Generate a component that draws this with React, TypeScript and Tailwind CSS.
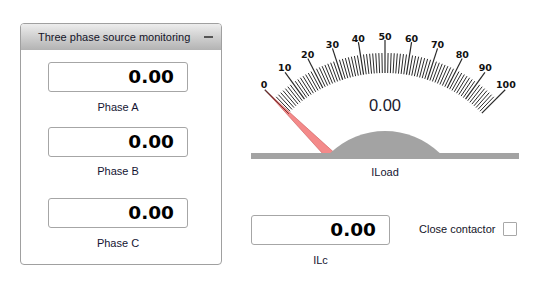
const CX = 385;
const CY = 210;

const polar = (r: number, deg: number) => {
  const a = (deg * Math.PI) / 180;
  return { x: CX + r * Math.cos(a), y: CY - r * Math.sin(a) };
};

const valueToAngle = (v: number) => 135 - (v / 100) * 90;

const Gauge = ({ value }: { value: number }) => {
  // 8 minor steps between labelled ticks
  const ticks = Array.from({ length: 81 }, (_, i) => i * 1.25);
  const na = valueToAngle(value);
  const tip = polar(169, na);
  const base = polar(77, na);
  const perp = { x: Math.sin((na * Math.PI) / 180), y: Math.cos((na * Math.PI) / 180) };
  const hw = 4.6;
  const needle = `${tip.x},${tip.y} ${base.x + perp.x * hw},${base.y + perp.y * hw} ${base.x - perp.x * hw},${base.y - perp.y * hw}`;
  const lineEnd = polar(136, na);

  return (
    <svg width={280} height={142} viewBox="245 20 280 142" className="block">
      {ticks.map((v) => {
        const major = v % 10 === 0;
        const a = valueToAngle(v);
        const p1 = polar(137, a);
        const p2 = polar(major ? 170 : 157, a);
        return (
          <line
            key={v}
            x1={p1.x}
            y1={p1.y}
            x2={p2.x}
            y2={p2.y}
            stroke="#2a2a2a"
            strokeWidth={major ? 1.2 : 1}
          />
        );
      })}
      {Array.from({ length: 11 }, (_, i) => i * 10).map((v) => {
        const a = valueToAngle(v);
        const p = polar(174, a + (90 - a) / 45);
        return (
          <text
            key={v}
            x={p.x}
            y={p.y}
            textAnchor="middle"
            dominantBaseline="central"
            fontFamily="DejaVu Sans, sans-serif"
            fontWeight="bold"
            fontSize="9.5"
            fill="#111"
          >
            {v}
          </text>
        );
      })}
      <text
        x={CX}
        y={105}
        textAnchor="middle"
        dominantBaseline="central"
        fontFamily="Liberation Sans, sans-serif"
        fontSize="16.5"
        fill="#1a1a2e"
      >
        {value.toFixed(2)}
      </text>
      <polygon points={needle} fill="#f48a8a" stroke="#c85a5a" strokeWidth={0.6} />
      <line x1={tip.x} y1={tip.y} x2={lineEnd.x} y2={lineEnd.y} stroke="#5a1a1a" strokeWidth={0.8} />
      <path d="M 330.3 153 A 79 79 0 0 1 439.7 153 Z" fill="#a3a3a3" />
      <rect x={251} y={153} width={268} height={6} fill="#a3a3a3" />
    </svg>
  );
};

const ValueBox = ({ value, width }: { value: string; width: string }) => (
  <div
    className={`${width} h-[30px] bg-white border border-[#a6a6a6] rounded-[3px] flex items-center justify-end pr-[13px] font-['DejaVu_Sans',sans-serif] font-bold text-[18.5px] text-black`}
  >
    {value}
  </div>
);

const Caption = ({ children, className = "" }: { children: string; className?: string }) => (
  <div className={`w-[140px] text-center text-[11px] leading-[14px] text-[#141432] ${className}`}>{children}</div>
);

const App = () => {
  return (
    <div className="w-[549px] h-[293px] bg-white flex pt-[20px] pl-[20px] font-['Liberation_Sans',sans-serif]">
      <div className="mt-[3px] w-[202px] h-[242px] border border-[#a0a0a0] rounded-[4px] flex flex-col overflow-hidden">
        <div className="h-[26px] bg-gradient-to-b from-[#ededed] to-[#b3b3b3] flex items-center justify-between pl-[17px] pr-[8px]">
          <span className="text-[11px] text-[#141428]">Three phase source monitoring</span>
          <span className="w-[9px] h-[2px] bg-[#555]" />
        </div>
        <div className="flex flex-col pl-[27px]">
          <div className="mt-[12px]">
            <ValueBox value="0.00" width="w-[140px]" />
          </div>
          <Caption className="mt-[8px]">Phase A</Caption>
          <div className="mt-[13px]">
            <ValueBox value="0.00" width="w-[140px]" />
          </div>
          <Caption className="mt-[7px]">Phase B</Caption>
          <div className="mt-[20px]">
            <ValueBox value="0.00" width="w-[140px]" />
          </div>
          <Caption className="mt-[8px]">Phase C</Caption>
        </div>
      </div>

      <div className="ml-[23px] flex flex-col">
        <Gauge value={0} />
        <div className="mt-[3px] w-[280px] text-center text-[11px] leading-[14px] text-[#141432]">ILoad</div>
        <div className="mt-[36px] ml-[6px] flex items-start">
          <div className="flex flex-col">
            <ValueBox value="0.00" width="w-[139px]" />
            <div className="mt-[8px] w-[139px] text-center text-[11px] leading-[14px] text-[#141432]">ILc</div>
          </div>
          <span className="mt-[7px] ml-[29px] w-[84px] text-[11px] leading-[14px] text-[#141428]">Close contactor</span>
          <span className="mt-[7px] w-[14px] h-[14px] border border-[#a8a8a8] rounded-[1px] bg-white" />
        </div>
      </div>
    </div>
  );
};

export default App;
